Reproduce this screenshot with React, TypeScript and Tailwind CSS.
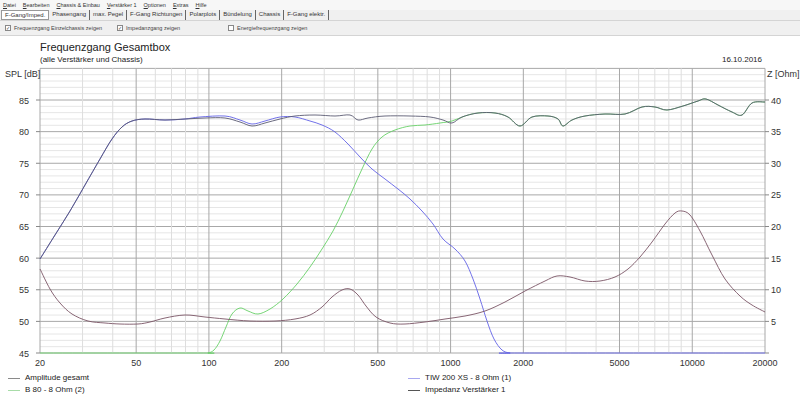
import React from "react";

type Pt = [number, number];

const X = (f: number) => 40 + 241.67 * Math.log10(f / 20);
const Y = (db: number) => 354 - (db - 45) * 6.325;

function smooth(pts: Pt[]) {
  let d = `M${pts[0][0]},${pts[0][1]}`;
  for (let i = 0; i < pts.length - 1; i++) {
    const p0 = pts[i - 1] || pts[i];
    const p1 = pts[i];
    const p2 = pts[i + 1];
    const p3 = pts[i + 2] || p2;
    const c1x = p1[0] + (p2[0] - p0[0]) / 6;
    const c1y = p1[1] + (p2[1] - p0[1]) / 6;
    const c2x = p2[0] - (p3[0] - p1[0]) / 6;
    const c2y = p2[1] - (p3[1] - p1[1]) / 6;
    d += ` C${c1x.toFixed(1)},${c1y.toFixed(1)} ${c2x.toFixed(1)},${c2y.toFixed(1)} ${p2[0]},${p2[1]}`;
  }
  return d;
}

const lowEnd: Pt[] = [
  [40, 260], [55, 236], [70, 212], [85, 186], [100, 160], [112, 140], [122, 128],
  [132, 122], [145, 120], [165, 121], [185, 120], [205, 119], [225, 119], [240, 123],
  [252, 127], [265, 124], [280, 120],
];

const highEnd: Pt[] = [
  [478, 114], [495, 114], [508, 118], [520, 127], [532, 118], [548, 117], [558, 120],
  [563, 127], [572, 121], [585, 117], [605, 115], [625, 115], [642, 108], [655, 108],
  [667, 111], [683, 107], [698, 102], [706, 100], [718, 106], [732, 113], [742, 116],
  [752, 104], [765, 103],
];

const overall: Pt[] = [
  ...lowEnd,
  [295, 117], [315, 116], [335, 117], [350, 116], [358, 121], [368, 119], [385, 117],
  [410, 117], [430, 118], [443, 121], [452, 124], [462, 118],
  ...highEnd,
];

const woofer: Pt[] = [
  ...lowEnd.slice(0, 11),
  [200, 118], [225, 117], [240, 121], [252, 125], [265, 122], [280, 118], [295, 118],
  [310, 122], [322, 126], [335, 133], [348, 145], [360, 158], [372, 170], [385, 180],
  [398, 190], [410, 200], [422, 212], [433, 225], [443, 240], [455, 250], [465, 262],
  [473, 280], [480, 300], [487, 322], [494, 340], [502, 351], [510, 354], [520, 354], [765, 354],
];

const tweeter: Pt[] = [
  [40, 354], [200, 354], [208, 354], [214, 351], [220, 342], [226, 328], [232, 315],
  [240, 309], [248, 312], [258, 315], [270, 310], [283, 300], [297, 285], [310, 268],
  [322, 250], [333, 232], [343, 212], [353, 190], [362, 170], [372, 150], [382, 138],
  [395, 131], [410, 127], [425, 126], [440, 124], [452, 122], [465, 117],
  ...highEnd,
];

const impedance: Pt[] = [
  [40, 270], [50, 290], [60, 304], [72, 315], [88, 322], [105, 324], [120, 325],
  [138, 325], [150, 323], [165, 319], [185, 316], [205, 318], [225, 320], [250, 322],
  [275, 322], [295, 320], [310, 316], [322, 308], [332, 298], [342, 291], [350, 290],
  [358, 296], [366, 307], [376, 318], [390, 324], [405, 325], [425, 323], [445, 320],
  [465, 317], [485, 312], [505, 303], [525, 292], [545, 282], [557, 277], [570, 278],
  [585, 282], [600, 282], [615, 278], [628, 270], [640, 258], [652, 243], [665, 225],
  [675, 214], [682, 212], [690, 216], [700, 232], [712, 256], [725, 280], [740, 297],
  [752, 306], [765, 313],
];

const freqs: { f: number; major: boolean }[] = [];
[10, 100, 1000, 10000].forEach((dec) => {
  for (let m = 1; m <= 9; m++) {
    const f = m * dec;
    if (f > 20 && f < 20000) freqs.push({ f, major: m === 1 || m === 2 || m === 5 });
  }
});

const freqLabels = [20, 50, 100, 200, 500, 1000, 2000, 5000, 10000, 20000];

const menu = ["Datei", "Bearbeiten", "Chassis & Einbau", "Verstärker 1", "Optionen", "Extras", "Hilfe"];
const tabs = ["Phasengang", "max. Pegel", "F-Gang Richtungen", "Polarplots", "Bündelung", "Chassis", "F-Gang elektr."];

function Check({ on, label, w }: { on: boolean; label: string; w: string }) {
  return (
    <div className={`flex items-center gap-[3px] ${w}`}>
      <span className="w-[6px] h-[6px] border border-[#888] bg-white flex items-center justify-center text-[5px] leading-none">
        {on ? "✓" : ""}
      </span>
      <span>{label}</span>
    </div>
  );
}

export default function App() {
  const dbs = Array.from({ length: 46 }, (_, i) => 45 + i);
  return (
    <div className="w-[800px] h-[401px] bg-white overflow-hidden text-black font-['Liberation_Sans',Arial,sans-serif]">
      {/* menu */}
      <div className="h-[10px] bg-[#f7f7f7] flex items-center gap-[7px] pl-[3px] text-[5.5px] leading-[10px] text-[#333]">
        {menu.map((m) => (
          <span key={m}>
            <span className="underline">{m[0]}</span>
            {m.slice(1)}
          </span>
        ))}
      </div>
      {/* tabs */}
      <div className="h-[10px] bg-[#f0f0f0] flex items-stretch pl-[1px] text-[6px] leading-[9px] text-[#333]">
        <span className="border border-[#999] bg-white px-[3px]">F-Gang/Imped.</span>
        {tabs.map((t) => (
          <span key={t} className="border-r border-[#666] px-[3px]">
            {t}
          </span>
        ))}
      </div>
      {/* options */}
      <div className="h-[16px] bg-[#f0f0f0] border-t border-[#d4d4d4] border-b flex items-center pl-[5px] text-[5.5px] text-[#444]">
        <Check on label="Frequenzgang Einzelchassis zeigen" w="w-[112px]" />
        <Check on label="Impedanzgang zeigen" w="w-[111px]" />
        <Check on={false} label="Energiefrequenzgang zeigen" w="w-[120px]" />
      </div>
      {/* title */}
      <div className="pl-[40px] pr-[38px] pt-[4px]">
        <div className="text-[11px] leading-[14px] text-[#222]">Frequenzgang Gesamtbox</div>
        <div className="flex justify-between text-[8px] leading-[11px] text-[#222]">
          <span>(alle Verstärker und Chassis)</span>
          <span>16.10.2016</span>
        </div>
      </div>
      {/* chart */}
      <svg width="800" height="306" viewBox="0 66 800 306" className="block">
        {dbs.map((db) => (
          <line
            key={db}
            x1={40}
            x2={765}
            y1={Y(db)}
            y2={Y(db)}
            stroke={db % 5 === 0 ? "#a8a8a8" : "#e6e6e6"}
            strokeWidth={1}
          />
        ))}
        {freqs.map(({ f, major }) => (
          <line
            key={f}
            x1={X(f)}
            x2={X(f)}
            y1={Y(90)}
            y2={Y(45)}
            stroke={major ? "#a8a8a8" : "#dedede"}
            strokeWidth={1}
          />
        ))}
        <line x1={40} x2={40} y1={Y(90)} y2={Y(45)} stroke="#a8a8a8" />
        <line x1={765} x2={765} y1={Y(90)} y2={Y(45)} stroke="#a8a8a8" />
        <g fontSize="9" fill="#333" fontFamily="'Liberation Sans', Arial, sans-serif">
          <text x={5} y={78}>SPL [dB]</text>
          <text x={767} y={78}>Z [Ohm]</text>
          {[45, 50, 55, 60, 65, 70, 75, 80, 85].map((db) => (
            <g key={db}>
              <text x={29} y={Y(db) + 3.5} textAnchor="end">{db}</text>
              <line x1={36} x2={40} y1={Y(db)} y2={Y(db)} stroke="#888" />
              <line x1={765} x2={769} y1={Y(db)} y2={Y(db)} stroke="#888" />
              {db > 45 && <text x={771} y={Y(db) + 3.5}>{db - 45}</text>}
            </g>
          ))}
          {freqLabels.map((f) => (
            <text key={f} x={X(f)} y={367} textAnchor="middle">{f}</text>
          ))}
        </g>
        <path d={smooth(tweeter)} fill="none" stroke="#66d066" strokeWidth={0.9} />
        <path d={smooth(woofer)} fill="none" stroke="#6262e6" strokeWidth={0.9} />
        <path d={smooth(overall)} fill="none" stroke="#5a5a72" strokeWidth={0.9} />
        <path d={smooth(impedance)} fill="none" stroke="#7a5565" strokeWidth={0.9} />
      </svg>
      {/* legend */}
      <div className="grid grid-cols-[400px_1fr] pl-[8px] pt-[1px] text-[8px] leading-[12px] text-[#222]">
        <div className="flex items-center gap-[5px]">
          <span className="w-[12px] h-px bg-[#8a8a8a]" />
          Amplitude gesamt
        </div>
        <div className="flex items-center gap-[5px]">
          <span className="w-[12px] h-px bg-[#a8a8f0]" />
          TIW 200 XS - 8 Ohm (1)
        </div>
        <div className="flex items-center gap-[5px]">
          <span className="w-[12px] h-px bg-[#a8dca8]" />
          B 80 - 8 Ohm (2)
        </div>
        <div className="flex items-center gap-[5px]">
          <span className="w-[12px] h-px bg-[#555]" />
          Impedanz Verstärker 1
        </div>
      </div>
    </div>
  );
}
